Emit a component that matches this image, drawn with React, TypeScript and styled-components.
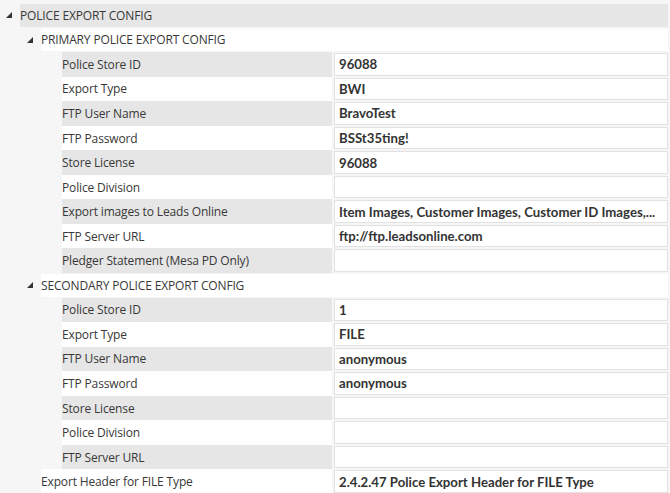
import React from 'react'
import styled, { createGlobalStyle } from 'styled-components';

const Global = createGlobalStyle`
  body {
    margin: 0;
    background: #f6f6f6;
    font-family: "Open Sans", "Noto Sans", sans-serif;
  }
`;

const ROW = 24.56;

type Field = { label: string; value?: string };

const primary: Field[] = [
  { label: 'Police Store ID', value: '96088' },
  { label: 'Export Type', value: 'BWI' },
  { label: 'FTP User Name', value: 'BravoTest' },
  { label: 'FTP Password', value: 'BSSt35ting!' },
  { label: 'Store License', value: '96088' },
  { label: 'Police Division' },
  { label: 'Export images to Leads Online', value: 'Item Images, Customer Images, Customer ID Images,...' },
  { label: 'FTP Server URL', value: 'ftp://ftp.leadsonline.com' },
  { label: 'Pledger Statement (Mesa PD Only)' },
];

const secondary: Field[] = [
  { label: 'Police Store ID', value: '1' },
  { label: 'Export Type', value: 'FILE' },
  { label: 'FTP User Name', value: 'anonymous' },
  { label: 'FTP Password', value: 'anonymous' },
  { label: 'Store License' },
  { label: 'Police Division' },
  { label: 'FTP Server URL' },
];

const Grid = styled.div`
  padding: 3px 2px 0 0;
  width: 670px;
  box-sizing: border-box;
`;

const Row = styled.div<{ indent: number }>`
  display: flex;
  height: ${ROW}px;
  padding-left: ${(p) => p.indent}px;
  box-sizing: border-box;
`;

const Toggle = styled.div<{ width: number }>`
  width: ${(p) => p.width}px;
  display: flex;
  align-items: center;
  justify-content: flex-end;
  padding-right: 8px;
  box-sizing: border-box;
`;

const Band = styled.div<{ shade: boolean }>`
  flex: 1;
  margin: 1px 0;
  display: flex;
  align-items: center;
  background: ${(p) => (p.shade ? '#e6e6e6' : '#ffffff')};
  color: #383838;
  font-size: 12px;
  letter-spacing: -0.15px;
  text-transform: uppercase;
`;

const Label = styled.div<{ shade: boolean; width: number }>`
  width: ${(p) => p.width}px;
  flex: none;
  display: flex;
  align-items: center;
  background: ${(p) => (p.shade ? '#e6e6e6' : '#ffffff')};
  color: #383838;
  font-size: 12px;
  letter-spacing: -0.15px;
  white-space: nowrap;
`;

const Value = styled.div`
  flex: 1;
  margin: 1px 0 1px 2px;
  display: flex;
  align-items: center;
  background: #fff;
  border: 1px solid #e2e2e2;
  padding-left: 4px;
  color: #333;
  font-family: Lato, "Open Sans", sans-serif;
  font-weight: 700;
  font-size: 13.2px;
  white-space: nowrap;
  overflow: hidden;
`;

function Arrow() {
  return (
    <svg width="6" height="6" viewBox="0 0 6 6">
      <polygon points="6,0 6,6 0,6" fill="#333" />
    </svg>
  );
}

function Fields({ items }: { items: Field[] }) {
  return (
    <>
      {items.map((f, i) => (
        <Row indent={62} key={f.label}>
          <Label shade={i % 2 === 0} width={270}>{f.label}</Label>
          <Value>{f.value}</Value>
        </Row>
      ))}
    </>
  );
}

export default function App() {
  return (
    <>
      <Global />
      <Grid>
        <Row indent={0}>
          <Toggle width={20}><Arrow /></Toggle>
          <Band shade>Police Export Config</Band>
        </Row>
        <Row indent={20}>
          <Toggle width={21}><Arrow /></Toggle>
          <Band shade={false}>Primary Police Export Config</Band>
        </Row>
        <Fields items={primary} />
        <Row indent={20}>
          <Toggle width={21}><Arrow /></Toggle>
          <Band shade={false}>Secondary Police Export Config</Band>
        </Row>
        <Fields items={secondary} />
        <Row indent={41}>
          <Label shade={false} width={291}>Export Header for FILE Type</Label>
          <Value>2.4.2.47 Police Export Header for FILE Type</Value>
        </Row>
      </Grid>
    </>
  );
}
